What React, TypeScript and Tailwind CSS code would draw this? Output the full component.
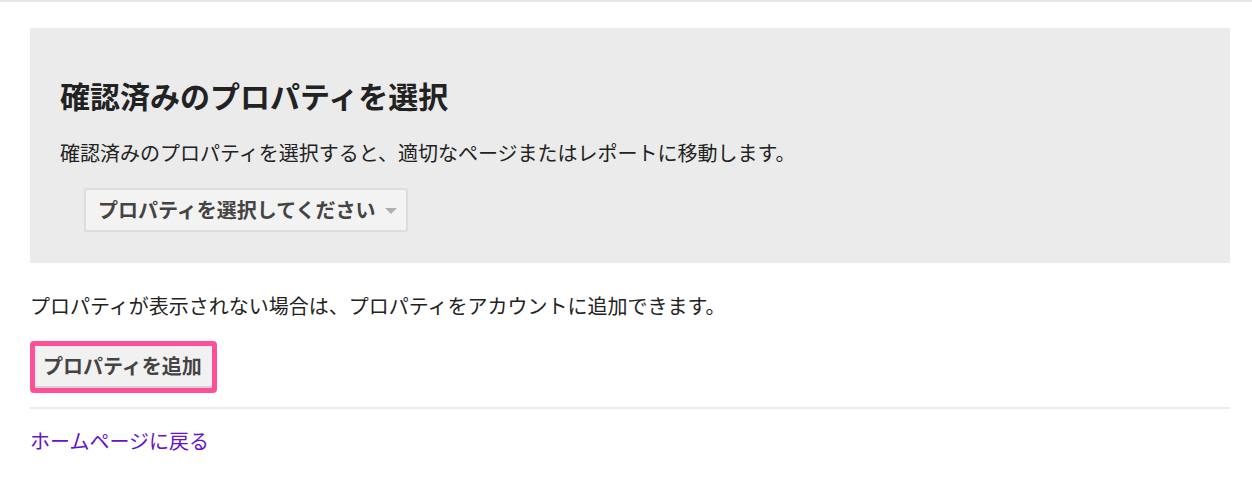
import React from "react";

export default function App() {
  return (
    <div
      className="w-[1252px] h-[492px] bg-white text-[#222]"
      style={{ fontFamily: '"Noto Sans CJK JP", "Noto Sans", sans-serif' }}
    >
      <div className="h-[2px] bg-[#e6e6e6]" />
      <div className="pl-[30px] pr-[22px]">
        <div className="mt-[26px] bg-[#ebebeb] pl-[30px] pt-[46px] pb-[31px]">
          <h1 className="text-[30px] leading-[42px] font-bold text-[#222]">
            確認済みのプロパティを選択
          </h1>
          <p className="mt-[23px] text-[20px] leading-[28px]">
            確認済みのプロパティを選択すると、適切なページまたはレポートに移動します。
          </p>
          <div className="mt-[21px] ml-[24px] w-[324px] h-[44px] flex items-center border-2 border-[#dcdcdc] rounded-[3px] bg-[#f3f3f3] pl-[12px]">
            <span className="text-[20px] font-bold text-[#444] leading-[28px]">
              プロパティを選択してください
            </span>
            <svg width="12" height="7" viewBox="0 0 12 7" className="ml-[9px] mt-[2px]">
              <path d="M0 0 L12 0 L6 6 Z" fill="#b0b0b0" />
            </svg>
          </div>
        </div>
        <p className="mt-[29px] text-[20px] leading-[28px]">
          プロパティが表示されない場合は、プロパティをアカウントに追加できます。
        </p>
        <div className="mt-[21px] w-[187px] h-[52px] border-[5px] border-[#ff4f98] rounded-[4px]">
          <button className="w-full h-full flex items-center pl-[8px] bg-[#f1f1f1] border-b-2 border-[#d4d4d4] text-[20px] font-bold text-[#444] leading-[28px]">
            プロパティを追加
          </button>
        </div>
        <div className="mt-[14px] h-[2px] bg-[#ebebeb]" />
        <a className="block mt-[18px] text-[20px] leading-[28px] text-[#6611cc]" href="#">
          ホームページに戻る
        </a>
      </div>
    </div>
  );
}
